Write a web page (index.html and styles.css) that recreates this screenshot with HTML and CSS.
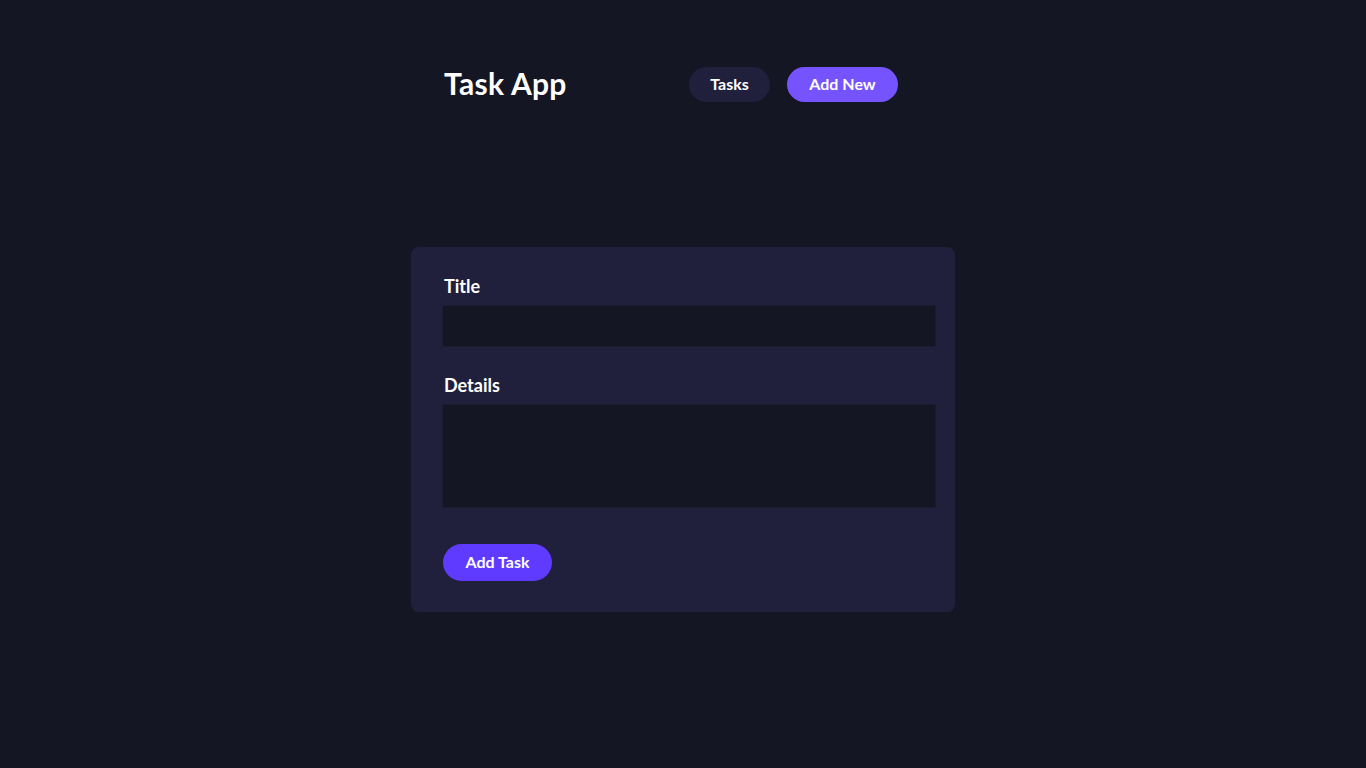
FILE: index.html
```html
<!DOCTYPE html>
<html lang="en">
<head>
<meta charset="utf-8">
<title>Task App</title>
<link rel="stylesheet" href="styles.css">
</head>
<body>
<header class="header">
  <h1 class="logo">Task App</h1>
  <nav class="nav">
    <a class="nav-btn nav-tasks" href="#">Tasks</a>
    <a class="nav-btn nav-add" href="#">Add New</a>
  </nav>
</header>
<main class="main">
  <form class="card">
    <label class="label" for="title">Title</label>
    <input class="input" id="title" type="text">
    <label class="label label-details" for="details">Details</label>
    <textarea class="textarea" id="details"></textarea>
    <button class="submit" type="button">Add Task</button>
  </form>
</main>
</body>
</html>
```

FILE: styles.css
```css
* { box-sizing: border-box; }
html, body { margin: 0; padding: 0; }
body {
  background: #151624;
  color: #fff;
  font-family: "Lato", "Noto Sans", sans-serif;
  min-height: 768px;
}
.header {
  width: 480px;
  margin: 0 auto;
  padding: 67px 25px 0 0;
  display: flex;
  align-items: center;
  justify-content: space-between;
}
.logo {
  margin: -3px 0 0 1px;
  font-size: 30px;
  font-weight: 700;
  letter-spacing: 0.3px;
  line-height: 35px;
}
.nav { display: flex; gap: 17px; align-items: center; }
.nav-btn {
  display: inline-flex;
  align-items: center;
  justify-content: center;
  height: 35px;
  padding-bottom: 2px;
  border-radius: 18px;
  color: #fff;
  text-decoration: none;
  font-weight: 700;
  font-size: 16px;
}
.nav-tasks { width: 81px; background: #20203c; }
.nav-add { width: 111px; background: #7553ff; }
.main {
  display: flex;
  justify-content: center;
  padding-top: 145px;
}
.card {
  width: 544px;
  background: #20203c;
  border-radius: 8px;
  padding: 30px 32px 31px;
  display: flex;
  flex-direction: column;
  align-items: flex-start;
}
.label {
  display: block;
  font-size: 18px;
  font-weight: 700;
  line-height: 18px;
  margin: 0 0 10px 1px;
}
.label-details { margin-bottom: 10px; }
.input, .textarea {
  display: block;
  width: 494px;
  margin-left: -1px;
  background: #151624;
  border: 1px solid #1c1c30;
  color: #fff;
  outline: none;
}
.input { height: 42px; margin-bottom: 29px; }
.textarea { height: 104px; resize: none; margin-bottom: 36px; }
.submit {
  width: 109px;
  height: 37px;
  border: none;
  border-radius: 19px;
  background: #5f3aff;
  color: #fff;
  font-family: inherit;
  font-weight: 700;
  font-size: 16px;
  padding: 0 0 2px;
  margin-left: 0;
}
```
